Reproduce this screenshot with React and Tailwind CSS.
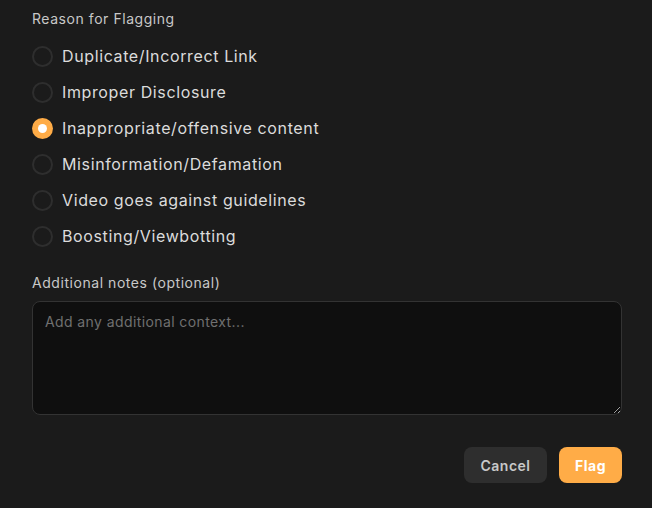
import React, { useState } from "react";

const reasons = [
  "Duplicate/Incorrect Link",
  "Improper Disclosure",
  "Inappropriate/offensive content",
  "Misinformation/Defamation",
  "Video goes against guidelines",
  "Boosting/Viewbotting",
];

export default function App() {
  const [sel, setSel] = useState(2);
  return (
    <div
      className="w-[652px] h-[508px] bg-[#1b1b1b] pl-8 pr-[30px] pt-[9px] flex flex-col"
      style={{ fontFamily: "Inter, 'Noto Sans', sans-serif" }}
    >
      <div className="text-[14px] leading-[20px] text-[#c8c8c8] tracking-[0.55px]">Reason for Flagging</div>
      <div className="mt-[15px] flex flex-col gap-[12px]">
        {reasons.map((r, i) => (
          <label key={r} className="flex items-center gap-[9px] h-[24px] cursor-pointer" onClick={() => setSel(i)}>
            {sel === i ? (
              <span className="w-[21px] h-[21px] rounded-full bg-[#ffac47] flex items-center justify-center">
                <span className="w-[9px] h-[9px] rounded-full bg-white" />
              </span>
            ) : (
              <span className="w-[21px] h-[21px] rounded-full border-2 border-[#2e2e2e]" />
            )}
            <span className="text-[16px] leading-[24px] text-[#dcdcdc] tracking-[0.62px]">{r}</span>
          </label>
        ))}
      </div>
      <div className="mt-[25px] text-[14px] leading-[20px] text-[#c8c8c8] tracking-[0.55px]">Additional notes (optional)</div>
      <textarea
        className="mt-[8px] h-[114px] w-full rounded-[8px] border border-[#333333] bg-[#0f0f0f] px-3 py-[9px] text-[14px] tracking-[0.4px] text-[#dcdcdc] placeholder:text-[#707070] outline-none resize-y"
        placeholder="Add any additional context..."
        style={{ fontFamily: "Inter, 'Noto Sans', sans-serif" }}
      />
      <div className="mt-[32px] flex justify-end gap-3">
        <button className="h-[36px] w-[83px] rounded-[8px] bg-[#2e2e2e] text-[14px] font-semibold tracking-[0.5px] text-[#c8c8c8]">Cancel</button>
        <button className="h-[36px] w-[63px] rounded-[8px] bg-[#ffac47] text-[14px] font-bold tracking-[0.5px] text-white">Flag</button>
      </div>
    </div>
  );
}
